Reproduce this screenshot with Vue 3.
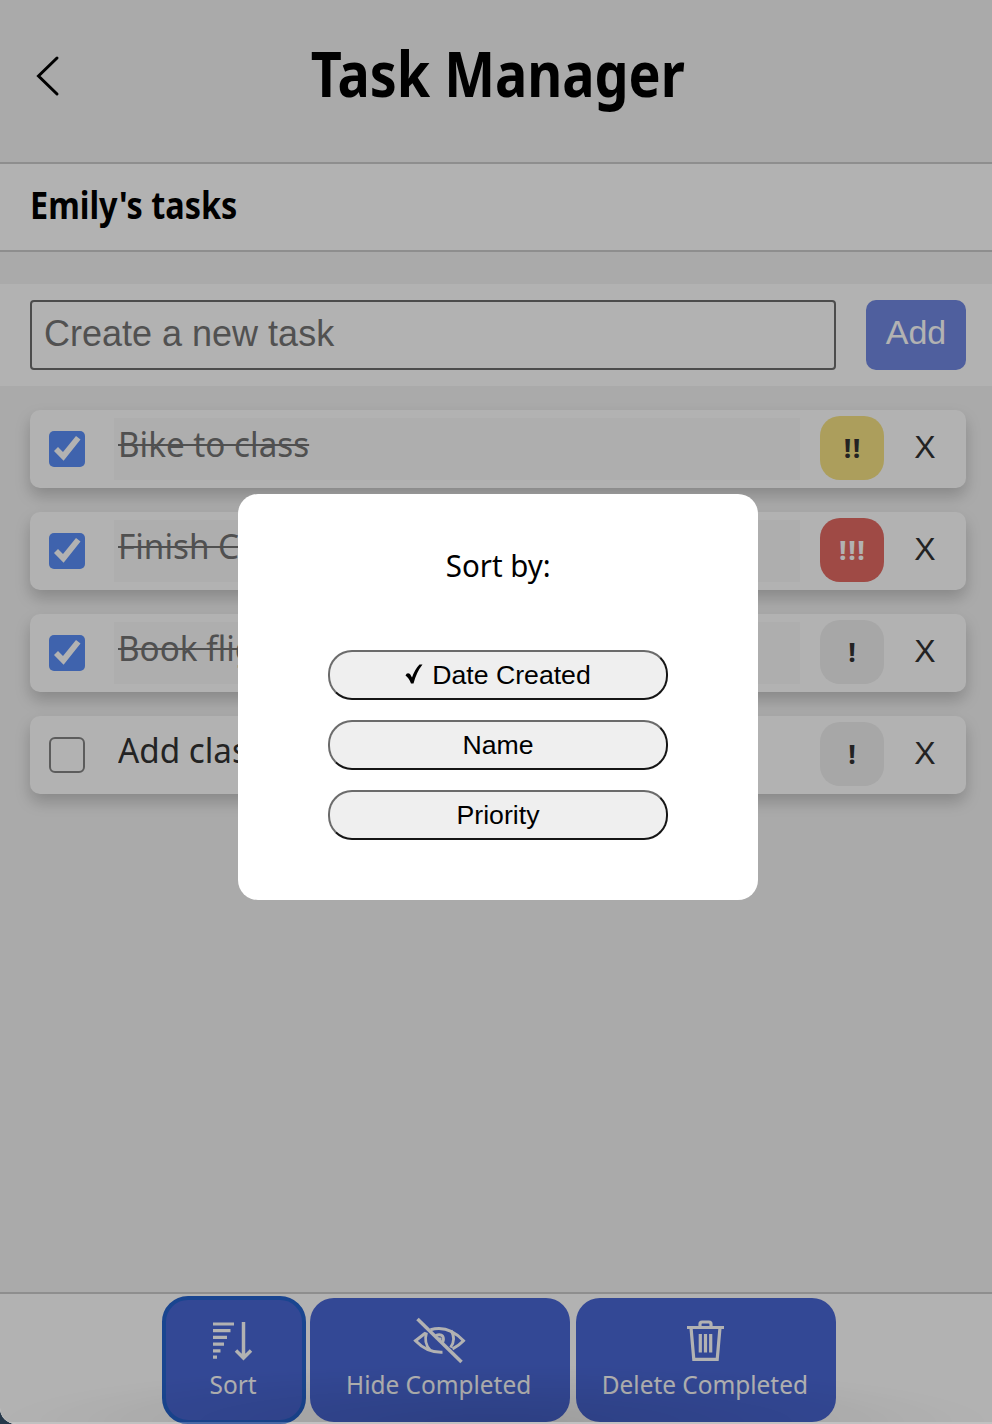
<script setup>
const tasks = [
  { name: 'Bike to class', done: true, level: 'medium', mark: '!!' },
  { name: 'Finish CS homework', done: true, level: 'high', mark: '!!!' },
  { name: 'Book flights', done: true, level: 'low', mark: '!' },
  { name: 'Add classes', done: false, level: 'low', mark: '!' },
]
const sorts = ['Date Created', 'Name', 'Priority']
</script>

<template>
  <div class="screen">
    <div class="page">
      <header class="top">
        <svg class="back" width="26" height="42" viewBox="0 0 26 42">
          <path d="M23 3 L4.500 21 L23 39" />
        </svg>
        <h1><span>Task Manager</span></h1>
      </header>
      <div class="owner"><h2>Emily's tasks</h2></div>
      <div class="create">
        <input type="text" placeholder="Create a new task" />
        <button class="add">Add</button>
      </div>
      <main class="list">
        <div v-for="t in tasks" :key="t.name" class="card">
          <svg v-if="t.done" class="box" viewBox="0 0 36 36">
            <rect width="36" height="36" rx="5" fill="#5b8ff8" />
            <path d="M5 20 L9 16 L14 21 L27 5 L31.500 8.500 L14.600 29.800 Z" fill="#fff" />
          </svg>
          <svg v-else class="box" viewBox="0 0 36 36">
            <rect x="1" y="1" width="34" height="34" rx="5" fill="none" stroke="#858585" stroke-width="2" />
          </svg>
          <div class="name" :class="{ done: t.done }"><span>{{ t.name }}</span></div>
          <div class="level" :class="t.level">{{ t.mark }}</div>
          <div class="remove">X</div>
        </div>
      </main>
      <footer class="bar">
        <button class="action active">
          <svg width="42" height="42" viewBox="0 0 42 42">
            <path d="M0 5h21M0 11.700h17.500M0 18.400h14M0 25.100h11M0 31.900h7.500M0 38.200h4" stroke-width="3.200" />
            <path d="M30.500 3V39.500M23 31.500l7.500 7.500 7.500-7.500" stroke-width="3.500" />
          </svg>
          <span>Sort</span>
        </button>
        <button class="action wide">
          <svg width="54" height="48" viewBox="0 0 54 48">
            <path d="M12.500 17 L2.500 24.700 Q14 36.800 29.500 36.200 M17.500 13.800 Q35 8.500 50.500 24.700 Q46 29.500 39.500 32.800" stroke-width="3" />
            <path d="M13.500 16.500 Q10.500 27 17 34 M38 14.500 Q43.500 23.500 37.500 31.500" stroke-width="2.800" />
            <path d="M22.500 19.500 Q30 17 30.500 23 Q30.500 26 28.500 27 M26 22l2 2" stroke-width="2.800" />
            <path d="M4.500 3 L48.500 46" stroke-width="3.500" />
          </svg>
          <span>Hide Completed</span>
        </button>
        <button class="action wide">
          <svg width="40" height="44" viewBox="0 0 40 44">
            <path d="M1 9.500H38M14 8V6Q14 4 16 4H23Q25 4 25 6V8M5 9.500L7.800 41.300H31.200L34 9.500" stroke-width="3.200" />
            <path d="M14.300 16V34.500M19.500 16V34.500M24.700 16V34.500" stroke-width="3.200" />
          </svg>
          <span>Delete Completed</span>
        </button>
      </footer>
    </div>
    <div class="overlay">
      <div class="modal">
        <p><span>Sort by:</span></p>
        <button v-for="(s, i) in sorts" :key="s"><svg v-if="i === 0" width="18" height="22" viewBox="0 0 18 22"><path d="M.5 12.500 Q2 9 5 11 L7 14.500 Q10 6 14.500 1.500 L17.500 1.500 Q11.500 9 8.500 20.500 L6 20.500 Q4 15 .5 12.500Z" /></svg>{{ s }}</button>
      </div>
    </div>
    <div class="shade"></div>
  </div>
</template>

<style>
body { background: #26384a; overflow: hidden; }
</style>

<style scoped>
* { box-sizing: border-box; }
.screen { position: relative; width: 992px; height: 1424px; overflow: hidden; border-bottom-left-radius: 16px; font-family: "Noto Sans", sans-serif; }
.page { width: 996px; height: 1424px; display: flex; flex-direction: column; background: #f4f4f4; }
.top { height: 164px; border-bottom: 2px solid #ccc; display: grid; grid-template-columns: 80px 1fr 80px; padding-top: 25px; }
.back { margin: 30px 0 0 34px; fill: none; stroke: #000; stroke-width: 3; stroke-linecap: round; }
h1 { margin: 0; text-align: center; font-size: 63px; line-height: 96px; white-space: nowrap; }
h1 span { display: inline-block; transform: scaleX(.855); }
.owner { height: 88px; background: #fff; border-bottom: 2px solid #ccc; padding-left: 30px; }
h2 { margin: 0; font-size: 38px; line-height: 80px; transform: scaleX(.853); transform-origin: left; white-space: nowrap; }
.create { margin-top: 32px; height: 102px; background: #fff; padding: 16px 30px; display: flex; gap: 30px; }
input { width: 806px; height: 70px; border: 2px solid #6e6e6e; border-radius: 4px; padding: 0 12px 2px; background: #fff; font: 36px "Liberation Sans", sans-serif; }
input::placeholder { color: #757575; }
.add { width: 100px; height: 70px; border: 0; border-radius: 10px; background: #7188e3; color: #fff; padding: 0 0 6px; font: 34px "Liberation Sans", sans-serif; }
.list { flex: 1; padding: 24px 30px; display: flex; flex-direction: column; gap: 24px; }
.card { height: 78px; background: #fff; border-radius: 10px; box-shadow: 0 8px 16px rgba(0,0,0,.2); display: flex; align-items: center; color: #333; }
.box { width: 36px; height: 36px; margin-left: 19px; }
.name { width: 686px; height: 62px; margin-left: 29px; padding-left: 4px; font-size: 35px; line-height: 51px; white-space: nowrap; }
.name span { display: inline-block; transform: scaleX(.95); transform-origin: left; }
.name.done { background: #f9f9f9; color: #737373; }
.name.done span { text-decoration: line-through; text-decoration-thickness: 2px; }
.level { width: 64px; height: 64px; margin: -2px 0 0 20px; border-radius: 20px; text-align: center; font-size: 27px; line-height: 64px; font-weight: 700; letter-spacing: 1.500px; padding-left: 1.500px; background: #efefef; }
.level.medium { background: #f6e385; }
.level.high { background: #e46b64; color: #fff; }
.remove { width: 42px; margin: -4px 0 0 20px; text-align: center; font: 32px "Liberation Sans", sans-serif; }
.bar { height: 132px; background: #fff; border-top: 2px solid #ccc; display: flex; justify-content: center; align-items: flex-start; gap: 6px; padding: 4px 0 0 4px; }
.action { position: relative; width: 140px; height: 124px; border: 0; border-radius: 24px; background: #4a67d6; color: #fff; padding: 18px 0 0; display: flex; flex-direction: column; align-items: center; font: 26px "Noto Sans", sans-serif; }
.action.wide { width: 260px; }
.action.active { outline: 4px solid #2563ce; outline-offset: -2px; }
.action svg { display: block; height: 48px; flex: none; fill: none; stroke: #fff; }
.action span { line-height: 40px; white-space: nowrap; transform: translateX(-1px) scaleX(.938); }
.overlay { position: absolute; inset: 0 -4px 0 0; background: rgba(0,0,0,.3); display: flex; justify-content: center; align-items: flex-start; padding-top: 494px; }
.modal { width: 520px; height: 406px; background: #fff; border-radius: 20px; display: flex; flex-direction: column; align-items: center; gap: 20px; }
.modal p { margin: 48px 0 42px; font-size: 31px; line-height: 46px; }
.modal p span { display: inline-block; transform: scaleX(.95); }
.modal button { width: 340px; height: 50px; border: 2px solid; border-color: #6b6b6b #151515 #151515 #6b6b6b; border-radius: 24px; background: #efefef; color: #000; font: 26.670px "Liberation Sans", sans-serif; padding: 0; }
.modal button svg { margin-right: 9px; vertical-align: -1px; }
.shade { position: absolute; inset: 1364px 0 0 0; background: radial-gradient(ellipse 50% 100% at 50% 100%, rgba(0,0,0,.12), transparent); border-bottom: 2px solid rgba(255,255,255,.2); }
</style>
